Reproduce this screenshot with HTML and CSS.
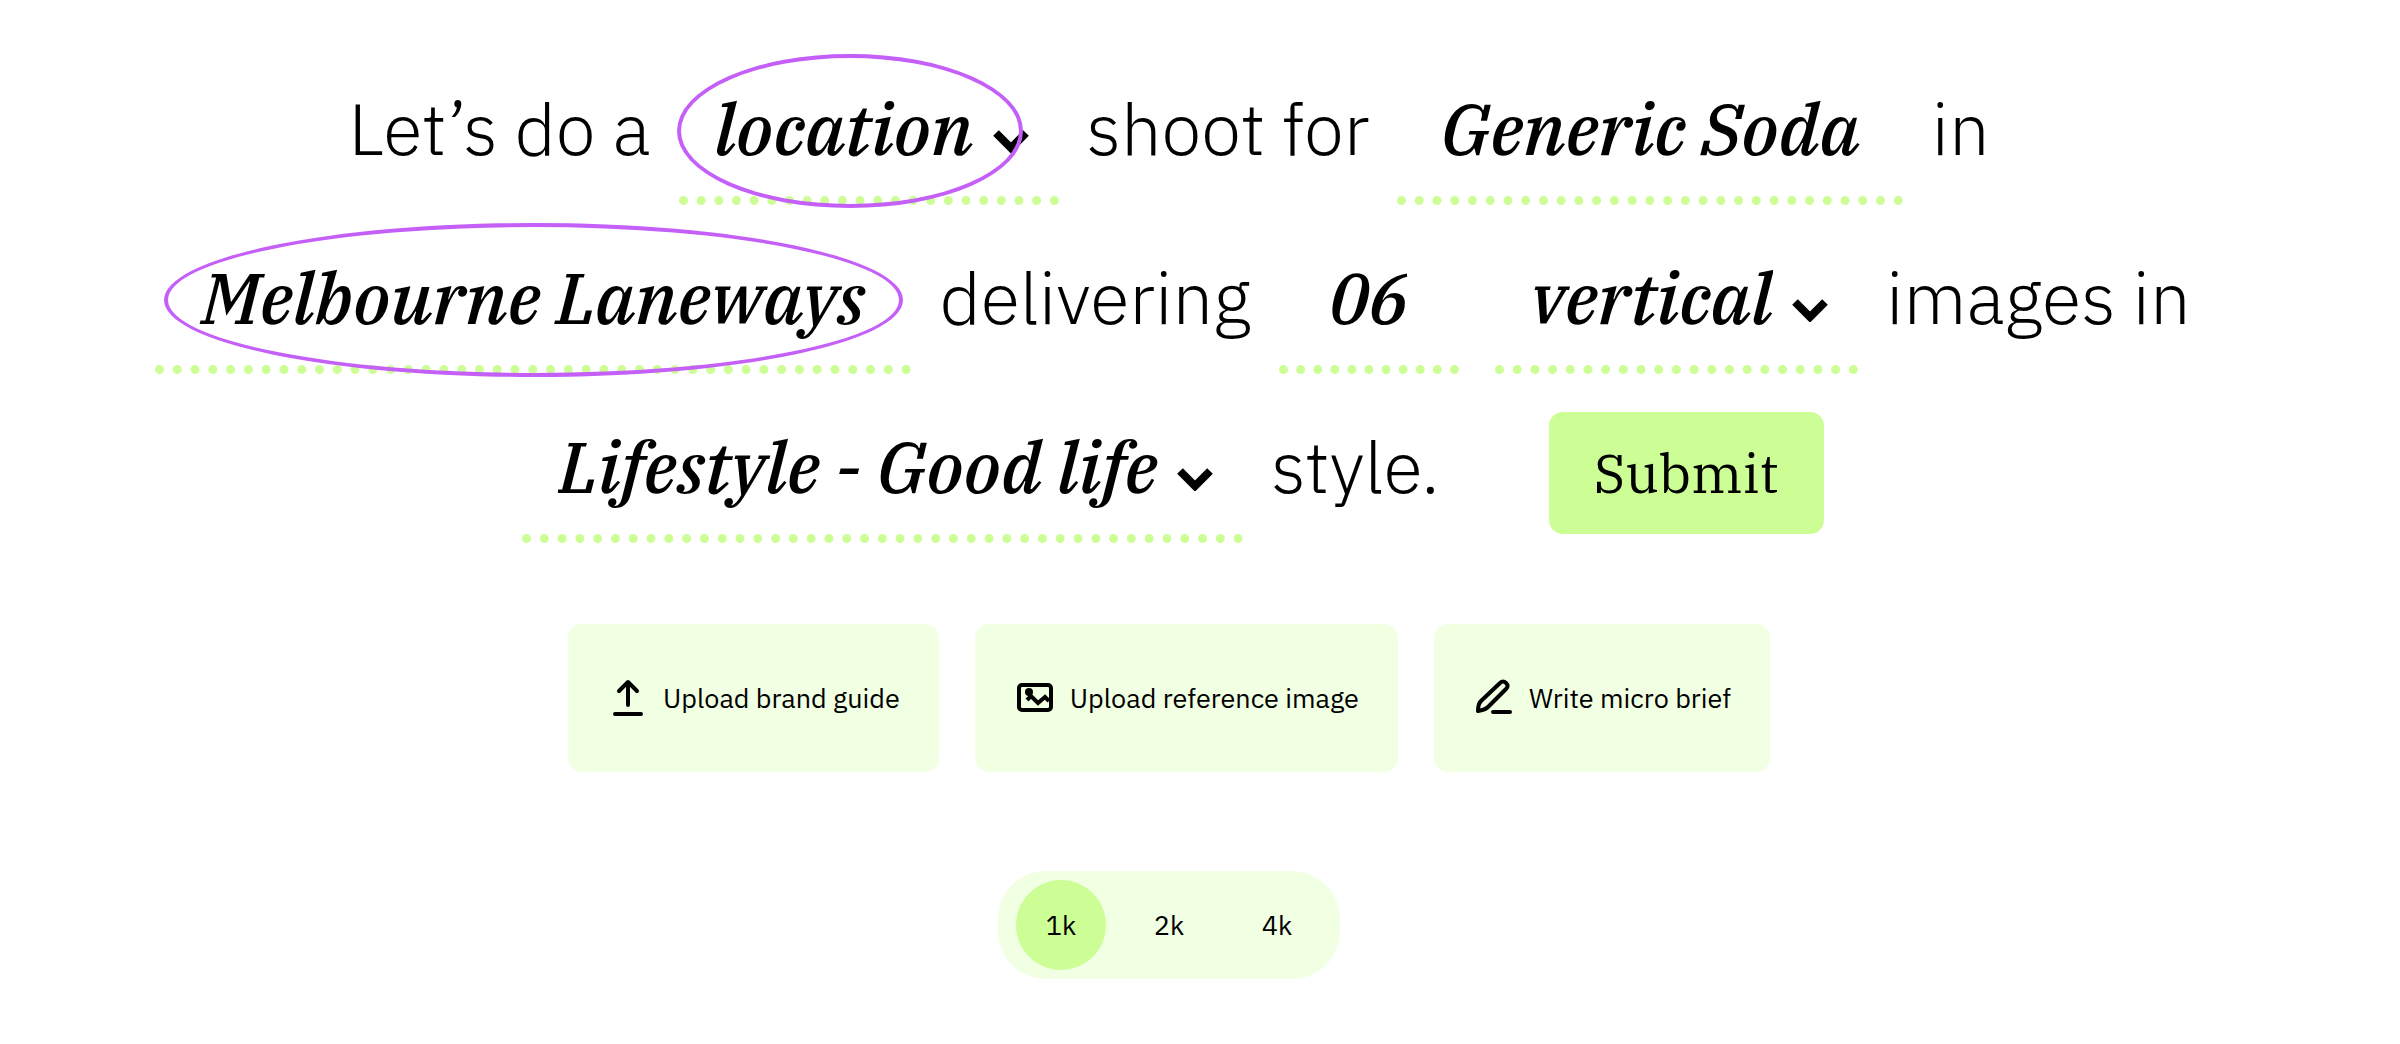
FILE: index.html
```
<!DOCTYPE html>
<html lang="en">
<head>
  <meta charset="UTF-8">
  <meta name="viewport" content="width=device-width, initial-scale=1.0">
  <title>Shoot brief</title>
  <link rel="stylesheet" href="styles.css">
</head>
<body>
  <main>
    <form id="brief" class="sentence">
      <span class="word">Let’s do a</span>
      <span class="field">
        <select aria-label="Shoot type">
          <option>location</option>
          <option>studio</option>
        </select>
        <svg class="chevron" viewBox="0 0 36 24" aria-hidden="true"><path d="M3 4l15 15L33 4"/></svg>
        <span class="ring ring-type"></span>
      </span>
      <span class="word">shoot for</span>
      <span class="field">
        <input class="brand" type="text" value="Generic Soda" aria-label="Brand">
      </span>
      <span class="word">in</span>
      <span class="field">
        <input class="place" type="text" value="Melbourne Laneways" aria-label="Place">
        <span class="ring ring-place"></span>
      </span>
      <span class="word">delivering</span>
      <span class="field">
        <input class="count" type="text" value="06" aria-label="Number of images">
      </span>
      <span class="field">
        <select aria-label="Orientation">
          <option>vertical</option>
          <option>square</option>
        </select>
        <svg class="chevron" viewBox="0 0 36 24" aria-hidden="true"><path d="M3 4l15 15L33 4"/></svg>
      </span>
      <span class="word">images in</span>
      <span class="field">
        <select aria-label="Style">
          <option>Lifestyle - Good life</option>
        </select>
        <svg class="chevron" viewBox="0 0 36 24" aria-hidden="true"><path d="M3 4l15 15L33 4"/></svg>
      </span>
      <span class="word">style.</span>
      <button class="submit" type="submit">Submit</button>
    </form>

    <div class="extras">
      <button class="card" type="button">
        <svg viewBox="0 0 36 36" aria-hidden="true">
          <path d="M18 25V3M9 11l9-9 9 9M5 34h26"/>
        </svg>
        Upload brand guide
      </button>
      <button class="card" type="button">
        <svg viewBox="0 0 36 36" aria-hidden="true">
          <rect x="2" y="5" width="32" height="25" rx="3"/>
          <circle class="solid" cx="12" cy="12" r="4"/>
          <path class="hills" d="M10 20l4-4 7 7 7-6 4 4"/>
        </svg>
        Upload reference image
      </button>
      <button class="card" type="button">
        <svg viewBox="0 0 36 36" aria-hidden="true">
          <path d="M2 31c0-4 0-7 3-10L24 3c2-2 4-2 6 0s2 4 0 6L12 27c-3 3-6 3-10 4zM17 32h17"/>
        </svg>
        Write micro brief
      </button>
    </div>

    <div class="sizes" role="radiogroup" aria-label="Image size">
      <label><input type="radio" name="size" form="brief" checked><span>1k</span></label>
      <label><input type="radio" name="size" form="brief"><span>2k</span></label>
      <label><input type="radio" name="size" form="brief"><span>4k</span></label>
    </div>
  </main>
</body>
</html>
```
FILE: styles.css
```
* {
  box-sizing: border-box;
}

body {
  margin: 0;
  background-color: #fff;
  color: #000;
  font-family: "IBM Plex Sans", Roboto, sans-serif;
}

main {
  display: flex;
  flex-direction: column;
  align-items: center;
  padding: 73px 136px 64px 74px;
}

.sentence {
  display: flex;
  flex-wrap: wrap;
  justify-content: center;
  align-items: baseline;
  row-gap: 37px;
  font-size: 72px;
  font-weight: 300;
  line-height: 94px;
}

.word {
  margin: 0 10px;
  white-space: nowrap;
}

.field {
  position: relative;
  margin: 0 18px;
}

.field select,
.field input {
  display: block;
  appearance: none;
  height: 132px;
  margin: 0;
  padding: 8px 36px 21px;
  border: 0;
  border-bottom: 9px dotted #cdfe95;
  border-radius: 0;
  background: none;
  color: #000;
  font: italic 500 72px/94px "IBM Plex Serif", "Liberation Serif", serif;
  outline: none;
}

.field select {
  padding-right: 85px;
}

.field input {
  text-align: center;
}

.brand {
  width: 506px;
}

.place {
  width: 756px;
}

.count {
  width: 180px;
}

.chevron {
  position: absolute;
  right: 30px;
  top: 56px;
  width: 36px;
  height: 24px;
  fill: none;
  stroke: #000;
  stroke-width: 8;
  pointer-events: none;
}

/* oval highlight round a field */
.ring {
  position: absolute;
  top: -19px;
  height: 154px;
  border: 4px solid #c45ff8;
  border-radius: 50%;
  pointer-events: none;
}

.ring-type {
  left: -2px;
  width: 346px;
}

.ring-place {
  left: 9px;
  width: 739px;
}

.submit {
  margin: 0 10px 0 99px;
  padding: 26px 45px;
  border: 0;
  border-radius: 14px;
  background-color: #cdfe95;
  color: #000;
  font: 400 54px/70px "IBM Plex Serif", "Liberation Serif", serif;
  cursor: pointer;
}

.extras {
  display: flex;
  flex-wrap: wrap;
  justify-content: center;
  gap: 36px;
  margin-top: 81px;
}

.card {
  display: flex;
  align-items: center;
  gap: 17px;
  padding: 56px 39px 56px 42px;
  border: 0;
  border-radius: 14px;
  background-color: #f1ffe3;
  color: #000;
  font: 400 27px/36px "IBM Plex Sans", Roboto, sans-serif;
  cursor: pointer;
}

.card svg {
  width: 36px;
  height: 36px;
  overflow: visible;
  fill: none;
  stroke: #000;
  stroke-width: 4;
  stroke-linecap: round;
  stroke-linejoin: round;
}

.card .solid {
  fill: #000;
  stroke: none;
}

.card .hills {
  stroke-linecap: butt;
  stroke-linejoin: miter;
}

.sizes {
  display: flex;
  gap: 18px;
  margin-top: 99px;
  padding: 9px 18px;
  border-radius: 48px;
  background-color: #f1ffe3;
}

.sizes input {
  position: absolute;
  opacity: 0;
}

.sizes span {
  display: flex;
  align-items: center;
  justify-content: center;
  width: 90px;
  height: 90px;
  border-radius: 50%;
  font-size: 27px;
  line-height: 36px;
  cursor: pointer;
}

.sizes input:checked + span {
  background-color: #cdfe95;
}
```
